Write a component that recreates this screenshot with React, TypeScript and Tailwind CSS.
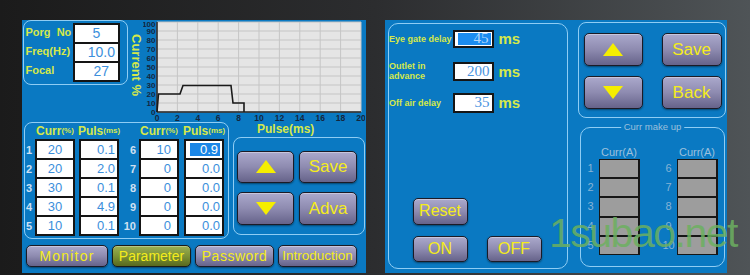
import React from 'react';

const BOX = 'rounded-[8px] border-[1.5px] border-[#8fcdf4]';
const CELL_TXT = 'text-[13px] text-[#3c8fdc] leading-none';

function Btn(props: { className?: string; children: React.ReactNode }) {
  return (
    <div
      className={`flex items-center justify-center rounded-[5px] border-[1.5px] border-[#1b1b26] bg-linear-to-b from-[#aba9cc] via-[#8e8bb0] to-[#66638a] text-[#f4ec1c] leading-none shadow-[inset_0_1px_0_rgba(255,255,255,0.35),0_1px_2px_rgba(0,0,0,0.45)] ${props.className ?? ''}`}
    >
      {props.children}
    </div>
  );
}

function Tri(props: { down?: boolean }) {
  return (
    <svg width="20" height="13" viewBox="0 0 20 13">
      <polygon points={props.down ? '0,0 20,0 10,13' : '10,0 20,13 0,13'} fill="#f5ee00" />
    </svg>
  );
}

function Chart() {
  const X = (t: number) => 14 + t * 10.2;
  const Y = (v: number) => 92 - v * 0.9;
  const ys = [0, 10, 20, 30, 40, 50, 60, 70, 80, 90, 100];
  const xs = [0, 2, 4, 6, 8, 10, 12, 14, 16, 18, 20];
  return (
    <svg width="222" height="102" viewBox="0 0 222 102" className="block">
      <rect x="14" y="2" width="204" height="90" fill="#e5e5e5" />
      {ys.map((v) => (
        <line key={'h' + v} x1="14" x2="218" y1={Y(v)} y2={Y(v)} stroke="#c5c5c5" strokeWidth="1" />
      ))}
      {xs.map((t) => (
        <line key={'v' + t} x1={X(t)} x2={X(t)} y1="2" y2="92" stroke="#c5c5c5" strokeWidth="1" />
      ))}
      <line x1="14" x2="14" y1="2" y2="92" stroke="#222" strokeWidth="1.5" />
      <line x1="14" x2="218" y1="92" y2="92" stroke="#222" strokeWidth="1.5" />
      <polyline
        points="14,92 15.5,74 37,74 40,65.5 88,65.5 90,83 101,83 101,92"
        fill="none"
        stroke="#1a1a1a"
        strokeWidth="1.6"
      />
      {ys.map((v) => (
        <text
          key={'yl' + v}
          x="12.5"
          y={Math.max(Y(v) + 3, 7)}
          textAnchor="end"
          fontSize="8"
          fontWeight="bold"
          fill="#14263d"
        >
          {v}
        </text>
      ))}
      {xs.map((t) => (
        <text key={'xl' + t} x={X(t)} y="100.5" textAnchor="middle" fontSize="8.5" fontWeight="bold" fill="#14263d">
          {t}
        </text>
      ))}
    </svg>
  );
}

function Stack(props: { values: string[]; align: string; sel?: number }) {
  return (
    <div className="flex w-[40px] flex-col gap-[2px] bg-[#151515] p-[2px]">
      {props.values.map((v, i) =>
        i === props.sel ? (
          <div key={i} className="flex h-[17px] bg-white p-[2px]">
            <div className="flex flex-1 items-center justify-end border-l-[2px] border-white bg-[#1b86e6] pr-[2px] text-[13px] leading-none text-white">
              {v}
            </div>
          </div>
        ) : (
          <div key={i} className={`flex h-[17px] items-center bg-white ${props.align} ${CELL_TXT}`}>
            {v}
          </div>
        )
      )}
    </div>
  );
}

function Nums(props: { nums: string[]; className: string }) {
  return (
    <div className={`flex flex-col pt-[18px] text-[11px] font-bold leading-none text-[#cfe0f2] ${props.className}`}>
      {props.nums.map((n) => (
        <div key={n} className="flex h-[19px] items-center">
          {n}
        </div>
      ))}
    </div>
  );
}

function Head(props: { a: string; b: string }) {
  return (
    <div className="flex h-[16px] w-[40px] items-center justify-center whitespace-nowrap font-bold text-[#d5e84b]">
      <span className="text-[12px] leading-none">{props.a}</span>
      <span className="text-[8px] leading-none">{props.b}</span>
    </div>
  );
}

function LeftScreen() {
  return (
    <div className="flex h-[253px] w-[344px] flex-col bg-[#0a79c2]">
      <div className="flex h-[102px]">
        <div className={`ml-[1px] flex h-[65px] w-[105px] ${BOX}`}>
          <div className="flex w-[49px] flex-col pl-[1.5px] pt-[2px] text-[11px] font-bold leading-none text-[#d5e84b]">
            <div className="flex h-[19px] items-center whitespace-pre">Porg  No</div>
            <div className="flex h-[19px] items-center">Freq(Hz)</div>
            <div className="flex h-[19px] items-center">Focal</div>
          </div>
          <div className="mt-[1.5px] flex h-[59px] w-[47px] flex-col gap-[2px] bg-[#141414] p-[2px]">
            <div className="flex h-[17px] items-center justify-center bg-white text-[14px] leading-none text-[#3c8fdc]">5</div>
            <div className="flex h-[17px] items-center justify-end bg-white pr-[3px] text-[14px] leading-none text-[#3c8fdc]">10.0</div>
            <div className="flex h-[17px] items-center justify-end bg-white pr-[9px] text-[14px] leading-none text-[#3c8fdc]">27</div>
          </div>
        </div>
        <div className="ml-[2px] w-[13px] pt-[14px] text-[13px] font-bold leading-none text-[#d5e84b] [writing-mode:vertical-rl]">
          Current %
        </div>
        <Chart />
      </div>

      <div className="flex h-[117px]">
        <div className={`ml-[2px] flex h-[117px] w-[205px] pl-[1px] ${BOX}`}>
          <Nums nums={['1', '2', '3', '4', '5']} className="w-[9px]" />
          <div className="flex flex-col">
            <Head a="Curr" b="(%)" />
            <Stack values={['20', '20', '30', '30', '10']} align="justify-center" />
          </div>
          <div className="ml-[4px] flex flex-col">
            <Head a="Puls" b="(ms)" />
            <Stack values={['0.1', '2.0', '0.1', '4.9', '0.1']} align="justify-end pr-[2px]" />
          </div>
          <Nums nums={['6', '7', '8', '9', '10']} className="w-[20px] items-end pr-[3px]" />
          <div className="flex flex-col">
            <Head a="Curr" b="(%)" />
            <Stack values={['10', '0', '0', '0', '0']} align="justify-end pr-[6px]" />
          </div>
          <div className="ml-[5px] flex flex-col">
            <Head a="Puls" b="(ms)" />
            <Stack values={['0.9', '0.0', '0.0', '0.0', '0.0']} align="justify-end pr-[2px]" sel={0} />
          </div>
        </div>
        <div className="ml-[4px] flex w-[132px] flex-col">
          <div className="flex h-[14px] items-center pl-[24px] text-[12px] font-bold leading-none text-[#d5e84b]">
            Pulse(ms)
          </div>
          <div className={`mt-[1px] h-[98px] w-[132px] pl-[3px] pt-[12.5px] ${BOX}`}>
            <div className="flex gap-[5px]">
              <Btn className="h-[32px] w-[57px]"><Tri /></Btn>
              <Btn className="h-[32px] w-[58px] text-[17px]">Save</Btn>
            </div>
            <div className="mt-[9px] flex gap-[5px]">
              <Btn className="h-[33px] w-[57px]"><Tri down /></Btn>
              <Btn className="h-[33px] w-[58px] text-[17px]">Adva</Btn>
            </div>
          </div>
        </div>
      </div>

      <div className="mt-[6px] flex gap-[4px] pl-[4px]">
        <Btn className="h-[22px] w-[82px] text-[14px] tracking-[1.2px]">Monitor</Btn>
        <div className="flex h-[22px] w-[79px] items-center justify-center rounded-[5px] border-[1.5px] border-[#1b1b16] bg-linear-to-b from-[#9bb052] via-[#7d9236] to-[#58691f] text-[14px] leading-none text-[#f4ec1c] shadow-[inset_0_1px_0_rgba(255,255,255,0.3),0_1px_2px_rgba(0,0,0,0.45)]">
          Parameter
        </div>
        <Btn className="h-[22px] w-[79px] text-[14px] tracking-[0.5px]">Password</Btn>
        <Btn className="h-[22px] w-[79px] text-[13.5px]">Introduction</Btn>
      </div>
    </div>
  );
}

function DelayRow(props: { label: React.ReactNode; value: string; h: string; mt: string; sel?: boolean }) {
  return (
    <div className={`flex items-center ${props.h} ${props.mt}`}>
      <div className="w-[63.5px] text-[9px] font-bold leading-[10px] text-[#d5e84b]">{props.label}</div>
      <div className={`flex h-full w-[41px] border-2 border-[#151515] ${props.sel ? 'bg-white p-[1px]' : 'bg-white'}`}>
        {props.sel ? (
          <div className="flex flex-1 items-center justify-end border-l-[2px] border-white bg-[#1b8cef] pr-[2px] font-['Liberation_Serif',serif] text-[15px] leading-none text-[#b3d7fb]">
            {props.value}
          </div>
        ) : (
          <div className="flex flex-1 items-center justify-end pr-[2px] font-['Liberation_Serif',serif] text-[15px] leading-none text-[#4a94df]">
            {props.value}
          </div>
        )}
      </div>
      <div className="ml-[5px] text-[15px] font-bold leading-none text-[#d5e84b]">ms</div>
    </div>
  );
}

function Bar(props: { nums: string[] }) {
  return (
    <div className="flex">
      <div className="mt-[12px] flex w-[16px] flex-col pt-[0.5px] text-[11px] leading-none text-[#86b3d6]">
        {props.nums.map((n) => (
          <div key={n} className="flex h-[19.2px] items-center justify-center">
            {n}
          </div>
        ))}
      </div>
      <div className="flex flex-col">
        <div className="flex h-[12px] w-[41px] items-center justify-center whitespace-nowrap text-[11px] leading-none text-[#9cc0dc]">
          Curr(A)
        </div>
        <div className="flex w-[41px] flex-col gap-[2px] bg-[#161616] p-[1.5px]">
          {props.nums.map((n) => (
            <div key={n} className="h-[17.2px] bg-[#9d9d9d]" />
          ))}
        </div>
      </div>
    </div>
  );
}

function RightScreen() {
  return (
    <div className="flex h-[253px] w-[342px] items-start bg-[#0a79c2]">
      <div className="ml-[3px] mt-[3px] flex h-[246px] w-[180px] flex-col rounded-[10px] border-[1.5px] border-[#8fcdf4] pt-[5.5px]">
        <DelayRow label="Eye gate delay" value="45" h="h-[18px]" mt="" sel />
        <DelayRow
          label={
            <>
              Outlet in
              <br />
              advance
            </>
          }
          value="200"
          h="h-[19px]"
          mt="mt-[14px]"
        />
        <DelayRow label="Off air delay" value="35" h="h-[20px]" mt="mt-[12px]" />
        <Btn className="ml-[23.5px] mt-[85px] h-[27px] w-[55px] text-[16px]">Reset</Btn>
        <div className="ml-[23.5px] mt-[11px] flex gap-[19px]">
          <Btn className="h-[26px] w-[55px] text-[16px]">ON</Btn>
          <Btn className="h-[26px] w-[55px] text-[16px]">OFF</Btn>
        </div>
      </div>

      <div className="ml-[10px] flex w-[148px] flex-col">
        <div className="mt-[2px] h-[96px] w-[148px] rounded-[8px] border-[1.5px] border-[#8fcdf4] pl-[4.5px] pt-[9.5px]">
          <div className="flex gap-[19px]">
            <Btn className="h-[33px] w-[59px]"><Tri /></Btn>
            <Btn className="h-[33px] w-[60px] text-[17px]">Save</Btn>
          </div>
          <div className="mt-[10px] flex gap-[19px]">
            <Btn className="h-[33px] w-[59px]"><Tri down /></Btn>
            <Btn className="h-[33px] w-[60px] text-[17px]">Back</Btn>
          </div>
        </div>
        <div className="relative ml-[2px] mt-[9px] flex h-[140px] w-[145px] gap-[21px] rounded-[10px] border-[1.5px] border-[#8fcdf4] pl-[1.5px] pt-[18.5px]">
          <span className="absolute -top-[6px] left-1/2 -translate-x-1/2 whitespace-nowrap bg-[#0a79c2] px-[3px] text-[9.5px] leading-none text-[#9cc0dc]">
            Curr make up
          </span>
          <Bar nums={['1', '2', '3', '4', '5']} />
          <Bar nums={['6', '7', '8', '9', '10']} />
        </div>
      </div>
    </div>
  );
}

export default function App() {
  return (
    <div className="relative h-[275px] w-[750px] overflow-hidden bg-linear-to-r from-[#1b1b1b] via-[#2c2d2f] to-[#4f5457] font-['Liberation_Sans',Arial,sans-serif]">
      <div className="flex gap-[19px] pl-[22px] pt-[20px]">
        <LeftScreen />
        <RightScreen />
      </div>
      <div className="pointer-events-none absolute left-[549px] top-[213px] text-[41px] leading-[40px] tracking-[-1.5px] text-[rgba(108,176,96,0.85)]">
        1subao.net
      </div>
    </div>
  );
}
